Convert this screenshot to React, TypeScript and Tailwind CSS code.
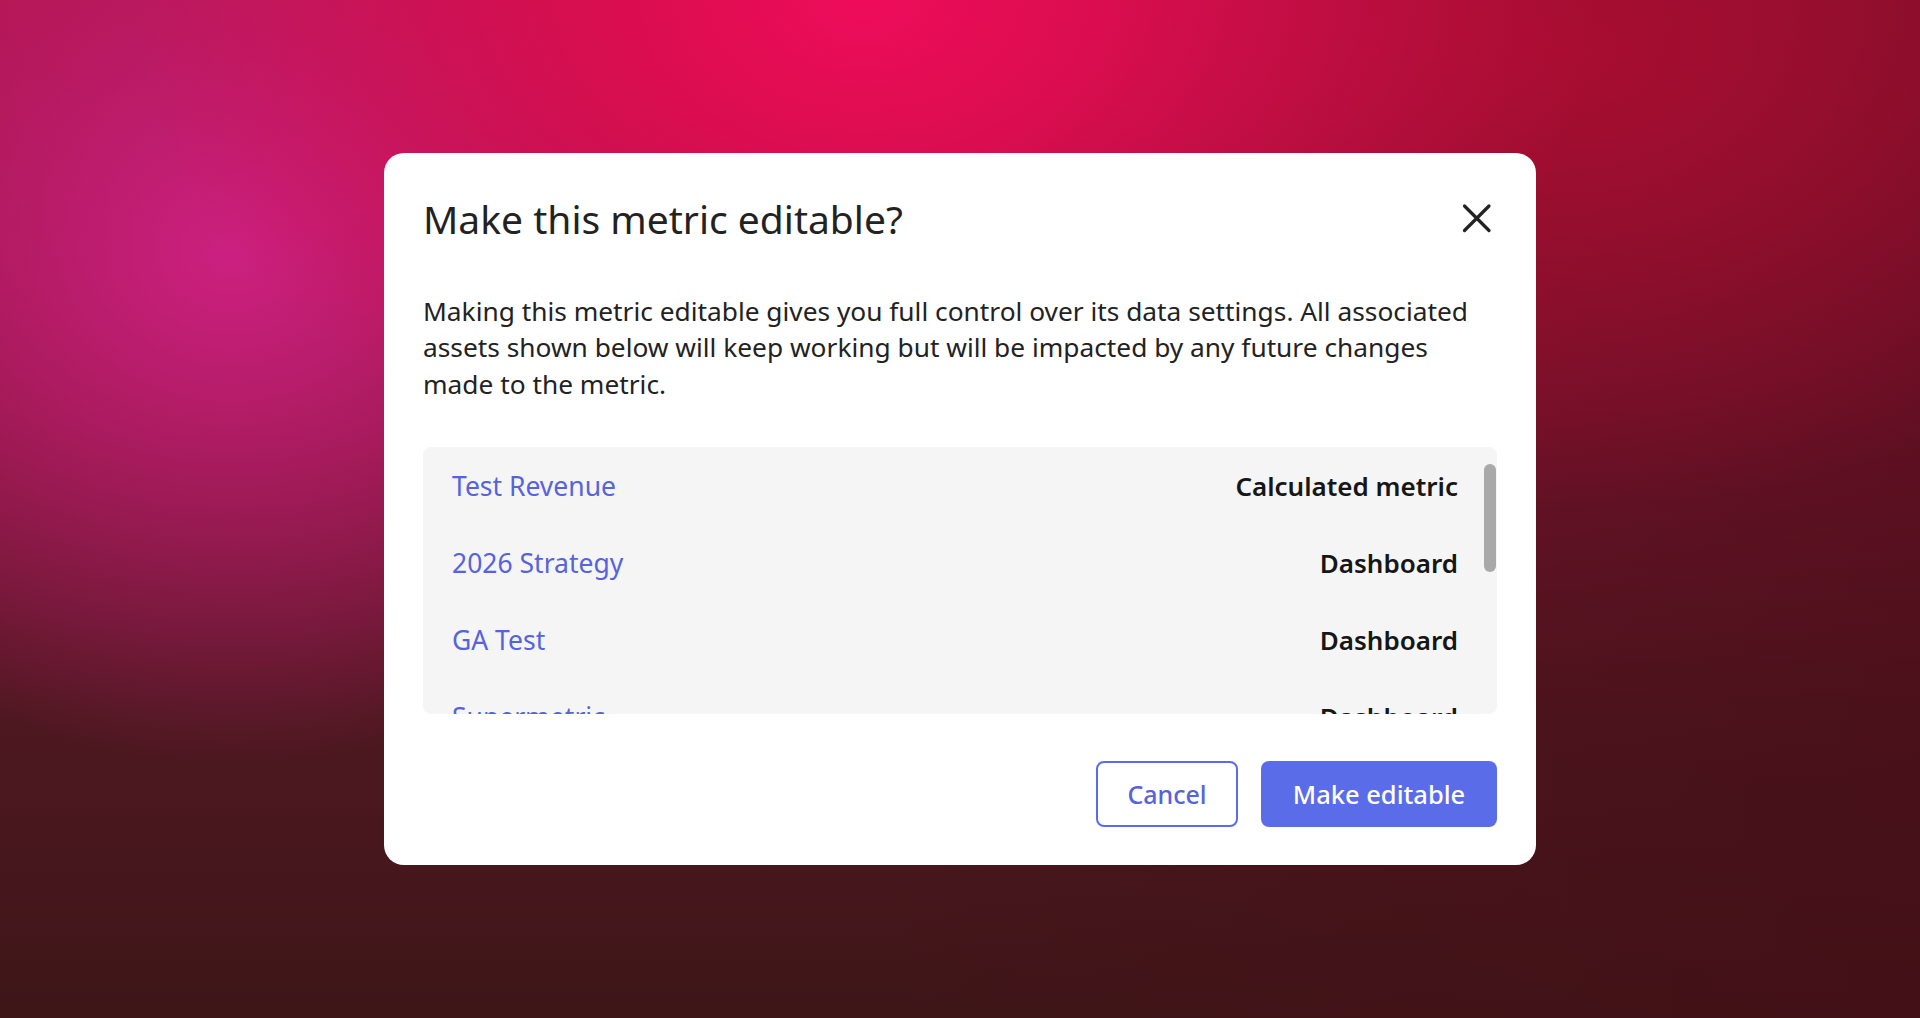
import React from 'react';

const assets = [
  { name: 'Test Revenue', type: 'Calculated metric' },
  { name: '2026 Strategy', type: 'Dashboard' },
  { name: 'GA Test', type: 'Dashboard' },
  { name: 'Supermetric', type: 'Dashboard' },
];

function CloseIcon() {
  return (
    <svg width="40" height="40" viewBox="0 0 40 40" fill="none">
      <path d="M7.5 7L32 31.5M32 7L7.5 31.5" stroke="#222222" strokeWidth="3.2" strokeLinecap="round" />
    </svg>
  );
}

export default function App() {
  return (
    <main className="flex h-screen w-full items-center justify-center bg-[radial-gradient(ellipse_38%_50%_at_45%_0%,#ee0c5a_0%,#dc0d50_30%,transparent_100%),radial-gradient(ellipse_30%_50%_at_12%_25%,#cc2080_0%,transparent_100%),radial-gradient(ellipse_35%_45%_at_82%_5%,#a80d30_0%,transparent_100%),linear-gradient(90deg,transparent_45%,rgba(70,10,20,0.5)_100%),linear-gradient(180deg,#a8123f_0%,#7c1430_40%,#4e1820_70%,#3e1618_100%)] font-['Noto_Sans',sans-serif]">
      <div className="flex w-[1152px] flex-col rounded-[20px] bg-white px-[39px] pt-[42px] pb-[38px]">
        <div className="flex h-[48px] items-center justify-between">
          <h1 className="text-[39px] font-normal leading-[48px] text-[#222222]">Make this metric editable?</h1>
          <button className="flex h-[40px] w-[40px] items-center justify-center">
            <CloseIcon />
          </button>
        </div>

        <p className="mt-[50px] text-[26.3px] leading-[36.5px] text-[#222222]">
          Making this metric editable gives you full control over its data settings. All associated assets shown below
          will keep working but will be impacted by any future changes made to the metric.
        </p>

        <div className="relative mt-[45px] h-[267px] overflow-hidden rounded-[8px] bg-[#f5f5f6] pt-[1px]">
          {assets.map((a) => (
            <div key={a.name} className="flex h-[77px] items-center justify-between pl-[29px] pr-[39px]">
              <span className="text-[26.5px] text-[#5563dc]">{a.name}</span>
              <span className="text-[26px] font-semibold text-[#161616]">{a.type}</span>
            </div>
          ))}
          <div className="absolute right-[1px] top-[17px] h-[108px] w-[12px] rounded-full bg-[#a9a9a9]" />
        </div>

        <div className="mt-[47px] flex justify-end gap-[23px]">
          <button className="h-[66px] w-[142px] rounded-[8px] border-2 border-[#5b6ce8] bg-white text-[25px] font-medium text-[#5563dc]">
            Cancel
          </button>
          <button className="h-[66px] w-[236px] rounded-[8px] bg-[#5b6ce9] text-[25.5px] font-medium text-white">
            Make editable
          </button>
        </div>
      </div>
    </main>
  );
}
